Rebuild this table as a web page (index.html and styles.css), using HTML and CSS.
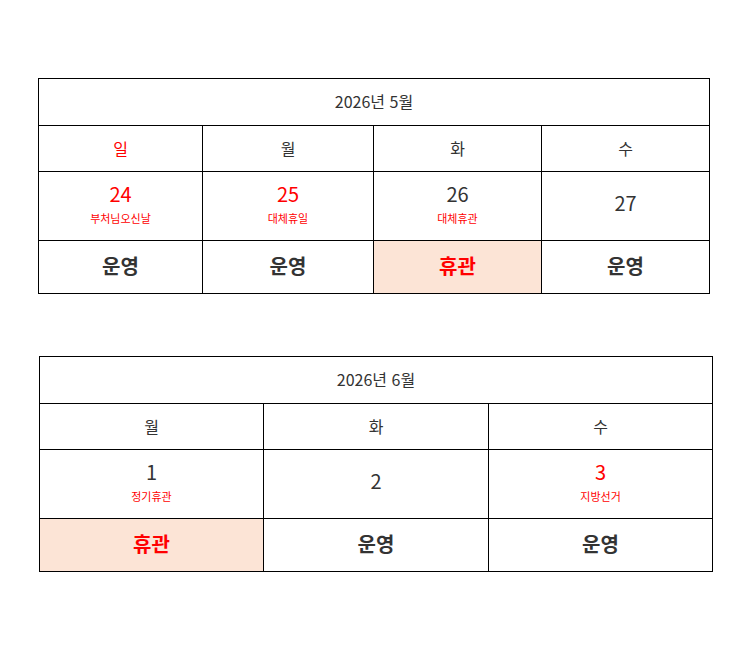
FILE: index.html
```html
<!DOCTYPE html>
<html lang="ko">
<head>
<meta charset="utf-8">
<link rel="stylesheet" href="styles.css">
</head>
<body>
<div class="page">
  <table class="cal cal-may">
    <colgroup><col style="width:164px"><col style="width:171px"><col style="width:168px"><col style="width:168px"></colgroup>
    <tr class="r-title"><td colspan="4">2026년 5월</td></tr>
    <tr class="r-day">
      <td class="red">일</td><td>월</td><td>화</td><td>수</td>
    </tr>
    <tr class="r-date">
      <td><div class="num red">24</div><div class="hol">부처님오신날</div></td>
      <td><div class="num red">25</div><div class="hol">대체휴일</div></td>
      <td><div class="num">26</div><div class="hol">대체휴관</div></td>
      <td><div class="num">27</div></td>
    </tr>
    <tr class="r-status">
      <td>운영</td><td>운영</td><td class="closed">휴관</td><td>운영</td>
    </tr>
  </table>

  <table class="cal cal-june">
    <colgroup><col style="width:224px"><col style="width:225px"><col style="width:224px"></colgroup>
    <tr class="r-title"><td colspan="3">2026년 6월</td></tr>
    <tr class="r-day">
      <td>월</td><td>화</td><td>수</td>
    </tr>
    <tr class="r-date">
      <td><div class="num">1</div><div class="hol">정기휴관</div></td>
      <td><div class="num">2</div></td>
      <td><div class="num red">3</div><div class="hol">지방선거</div></td>
    </tr>
    <tr class="r-status">
      <td class="closed">휴관</td><td>운영</td><td>운영</td>
    </tr>
  </table>
</div>
</body>
</html>
```

FILE: styles.css
```css
html, body {
  margin: 0;
  padding: 0;
  background: #ffffff;
}
body {
  font-family: "Noto Sans CJK KR", "Noto Sans", sans-serif;
  color: #333333;
}
.page {
  padding-top: 78px;
}
.cal {
  border-collapse: collapse;
  table-layout: fixed;
  text-align: center;
}
.cal td {
  border: 1px solid #000000;
  padding: 0;
  vertical-align: middle;
}
.cal-may {
  width: 672px;
  margin-left: 38px;
}
.cal-june {
  width: 674px;
  margin-left: 39px;
  margin-top: 62px;
}
.r-title td {
  height: 44px;
  padding-bottom: 2px;
  font-size: 16px;
}
.r-day td {
  height: 43px;
  padding-bottom: 2px;
  font-size: 16px;
}
.r-date td {
  height: 62px;
  padding-bottom: 6px;
}
.r-status td {
  height: 49px;
  padding-bottom: 3px;
  font-size: 20px;
  font-weight: bold;
}
.num {
  font-size: 20px;
  line-height: 26px;
}
.hol {
  font-size: 11px;
  line-height: 16px;
  color: #ff0000;
  margin-top: 3px;
}
.red {
  color: #ff0000;
}
.closed {
  background: #fce4d6;
  color: #ff0000;
}
```
